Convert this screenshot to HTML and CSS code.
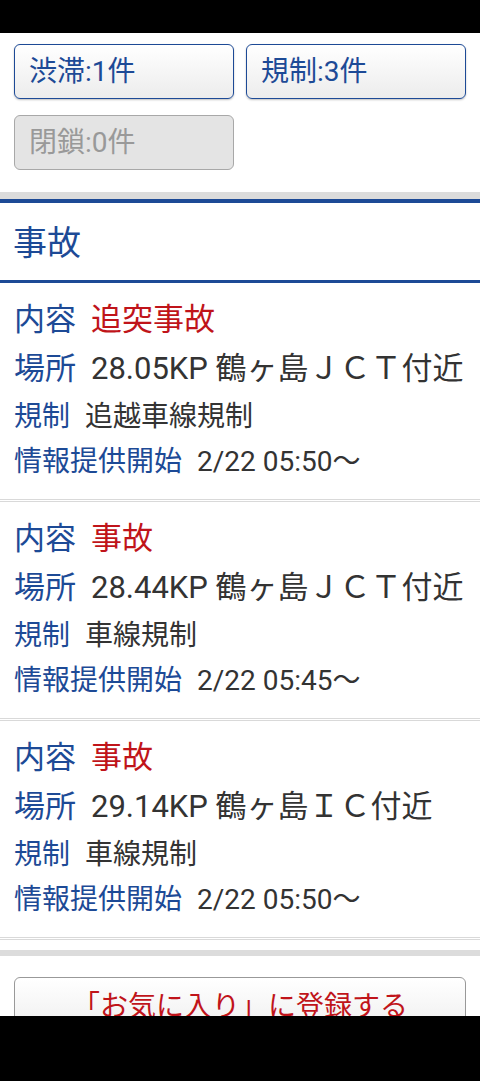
FILE: index.html
```html
<!DOCTYPE html>
<html lang="ja">
<head>
<meta charset="utf-8">
<link rel="stylesheet" href="styles.css">
</head>
<body>
<div class="statusbar"></div>
<div class="filters">
  <button class="fbtn">渋滞:1件</button>
  <button class="fbtn">規制:3件</button>
  <button class="fbtn disabled">閉鎖:0件</button>
</div>
<div class="band"></div>
<section class="section">
  <h2 class="sec-title">事故</h2>
  <div class="item">
    <div class="row r1"><span class="lbl">内容</span><span class="val red">追突事故</span></div>
    <div class="row r2"><span class="lbl">場所</span><span class="val">28.05KP 鶴ヶ島ＪＣＴ付近</span></div>
    <div class="row r3"><span class="lbl">規制</span><span class="val">追越車線規制</span></div>
    <div class="row r4"><span class="lbl">情報提供開始</span><span class="val">2/22 05:50～</span></div>
  </div>
  <div class="item">
    <div class="row r1"><span class="lbl">内容</span><span class="val red">事故</span></div>
    <div class="row r2"><span class="lbl">場所</span><span class="val">28.44KP 鶴ヶ島ＪＣＴ付近</span></div>
    <div class="row r3"><span class="lbl">規制</span><span class="val">車線規制</span></div>
    <div class="row r4"><span class="lbl">情報提供開始</span><span class="val">2/22 05:45～</span></div>
  </div>
  <div class="item">
    <div class="row r1"><span class="lbl">内容</span><span class="val red">事故</span></div>
    <div class="row r2"><span class="lbl">場所</span><span class="val">29.14KP 鶴ヶ島ＩＣ付近</span></div>
    <div class="row r3"><span class="lbl">規制</span><span class="val">車線規制</span></div>
    <div class="row r4"><span class="lbl">情報提供開始</span><span class="val">2/22 05:50～</span></div>
  </div>
</section>
<div class="band2"></div>
<div class="fav-wrap">
  <button class="fav">「お気に入り」に登録する</button>
</div>
<div class="navbar"></div>
</body>
</html>
```
FILE: styles.css
```css
html, body {
  margin: 0;
  padding: 0;
  background: #fff;
  font-family: Roboto, "Noto Sans CJK JP", sans-serif;
  color: #333;
}
.statusbar {
  height: 33px;
  background: #000;
}
.filters {
  display: grid;
  grid-template-columns: 220px 220px;
  column-gap: 12px;
  row-gap: 16px;
  padding: 11px 14px 22px;
}
.fbtn {
  height: 55px;
  box-sizing: border-box;
  border: 1.5px solid #1d4a96;
  border-radius: 6px;
  background: linear-gradient(#ffffff, #ececec);
  box-shadow: 0 1px 2px rgba(0,0,0,0.25);
  color: #1d4a96;
  font-family: Roboto, "Noto Sans CJK JP", sans-serif;
  font-size: 28px;
  text-align: left;
  padding: 0 0 0 14px;
  line-height: 52px;
}
.fbtn.disabled {
  background: #e4e4e4;
  border-color: #a8a8a8;
  color: #999;
  box-shadow: none;
}
.band {
  height: 7px;
  background: #dcdcdc;
}
.section {
  border-top: 4px solid #1d4a96;
}
.sec-title {
  margin: 0;
  height: 77px;
  line-height: 80px;
  padding-left: 13px;
  font-size: 34px;
  font-weight: normal;
  color: #1d4a96;
  border-bottom: 3px solid #1d4a96;
}
.item {
  padding: 13px 14px 15px;
  border-bottom: 3px double #d9d9d9;
}
.row {
  display: flex;
  align-items: baseline;
  white-space: nowrap;
}
.lbl {
  color: #1d4a96;
  margin-right: 15px;
}
.val.red {
  color: #c0141a;
}
.r1 { font-size: 31px; line-height: 48px; }
.r2 { font-size: 31px; line-height: 50px; }
.r3 { font-size: 28px; line-height: 46px; }
.r4 { font-size: 28px; line-height: 44px; }
.band2 {
  height: 6px;
  background: #dcdcdc;
  margin-top: 10px;
}
.fav-wrap {
  padding: 21px 14px 0;
}
.fav {
  width: 100%;
  height: 60px;
  border: 1px solid #999;
  border-radius: 6px;
  background: linear-gradient(#ffffff, #ededed);
  color: #c0141a;
  font-family: Roboto, "Noto Sans CJK JP", sans-serif;
  font-size: 28px;
  line-height: 56px;
  padding: 0;
}
.navbar {
  position: fixed;
  left: 0;
  right: 0;
  bottom: 0;
  height: 65px;
  background: #000;
}
```
